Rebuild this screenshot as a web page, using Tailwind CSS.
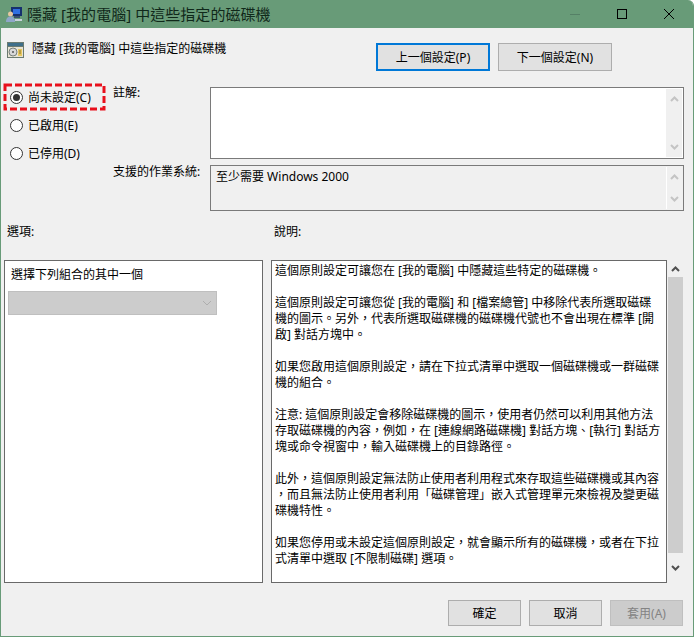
<!DOCTYPE html>
<html lang="zh-Hant">

<head>
    <meta charset="UTF-8">
    <title>隱藏 [我的電腦] 中這些指定的磁碟機</title>
    <script src="https://cdn.jsdelivr.net/npm/@tailwindcss/browser@4"></script>
</head>

<body class="bg-white">
    <div class="relative flex flex-col w-[694px] h-[637px] bg-[#f0f0f0] border-x border-b border-[#689b78] rounded-tr-[6px] overflow-hidden text-[12px] leading-[16px] text-black font-['Noto_Sans','Noto_Sans_CJK_TC',sans-serif]">

        <!-- Title bar -->
        <div class="flex items-center h-[28px] bg-[#689b78] shrink-0">
            <svg class="ml-[5px] w-[17px] h-[17px]" viewBox="0 0 17 17">
                <rect x="5" y="1" width="11" height="9" fill="#16306e" />
                <rect x="7" y="3" width="7" height="5" fill="#2f6fe0" />
                <rect x="8" y="10" width="6" height="2" fill="#39506e" />
                <circle cx="4.5" cy="8" r="2.5" fill="#e6c6a0" />
                <path d="M0 16c0-4 2-5.500 4.500-5.500S9 12 9 16z" fill="#8fa6c8" />
                <path d="M9 13h7v2H9z" fill="#c9d2dc" />
            </svg>
            <span class="ml-[4px] text-[15px] leading-[20px] tracking-[0.05px] text-[#10281a]">隱藏 [我的電腦] 中這些指定的磁碟機</span>
            <div class="ml-auto flex pr-[1px]">
                <div class="flex items-center justify-center w-[47px] h-[28px]">
                    <svg class="w-[10px] h-[10px]" viewBox="0 0 10 10"><path d="M0 5.500h10" stroke="#558066" fill="none" /></svg>
                </div>
                <div class="flex items-center justify-center w-[47px] h-[28px]">
                    <svg class="w-[10px] h-[10px]" viewBox="0 0 10 10"><rect x=".5" y=".5" width="9" height="9" stroke="#000" fill="none" /></svg>
                </div>
                <div class="flex items-center justify-center w-[47px] h-[28px]">
                    <svg class="w-[10px] h-[10px]" viewBox="0 0 10 10"><path d="M0 0l10 10M10 0L0 10" stroke="#000" fill="none" /></svg>
                </div>
            </div>
        </div>

        <!-- Policy name and prev/next -->
        <div class="flex h-[55px] shrink-0">
            <svg class="ml-[6px] mt-[14px] w-[17px] h-[16px]" viewBox="0 0 17 16">
                <rect x="0" y="0" width="17" height="16" fill="#6b7a70" />
                <rect x="1" y="1" width="15" height="3" fill="#3f6f8a" />
                <rect x="1" y="5" width="15" height="10" fill="#e8e4d4" />
                <circle cx="6" cy="10" r="4" fill="#d8d8d8" stroke="#77807c" />
                <circle cx="6" cy="10" r="1" fill="#555" />
                <path d="M11 7h4v7h-4z" fill="#e7c75f" />
                <path d="M12 9h2M12 11h2" stroke="#8a7430" />
            </svg>
            <span class="ml-[8px] mt-[13px] h-[16px]">隱藏 [我的電腦] 中這些指定的磁碟機</span>
            <div class="ml-auto flex gap-[8px] mt-[15px] pr-[81px]">
                <div class="flex items-center justify-center w-[114px] h-[28px] pt-[2px] bg-[#e1e1e1] border-2 border-[#0078d7]">上一個設定(P)</div>
                <div class="flex items-center justify-center w-[114px] h-[28px] pt-[2px] bg-[#e1e1e1] border border-[#adadad]">下一個設定(N)</div>
            </div>
        </div>

        <!-- State, comment, supported on -->
        <div class="flex h-[128px] shrink-0">
            <div class="flex flex-col w-[112px] pl-[9px]">
                <label class="flex items-center gap-[5px] h-[28px]">
                    <span class="flex items-center justify-center w-[13px] h-[13px] rounded-full bg-white border border-[#333]"><span class="w-[7px] h-[7px] rounded-full bg-[#333]"></span></span>
                    <span class="pt-[2px]">尚未設定(C)</span>
                </label>
                <label class="flex items-center gap-[5px] h-[28px]">
                    <span class="w-[13px] h-[13px] rounded-full bg-white border border-[#333]"></span>
                    <span class="pt-[2px]">已啟用(E)</span>
                </label>
                <label class="flex items-center gap-[5px] h-[28px]">
                    <span class="w-[13px] h-[13px] rounded-full bg-white border border-[#333]"></span>
                    <span class="pt-[2px]">已停用(D)</span>
                </label>
            </div>
            <div class="flex flex-col w-[97px] pt-[2px]">
                <span>註解:</span>
                <span class="mt-[63px]">支援的作業系統:</span>
            </div>
            <div class="flex flex-col gap-[6px] w-[474px] pt-[4px]">
                <div class="flex justify-end h-[72px] bg-white border border-[#7a7a7a] p-[1px]">
                    <div class="flex flex-col justify-between items-center w-[16px] bg-[#f0f0f0] py-[7px]">
                        <svg class="w-[9px] h-[6px]" viewBox="0 0 9 6"><path d="M1 5l3.500-3.500L8 5" stroke="#c4c4c4" stroke-width="2" fill="none" /></svg>
                        <svg class="w-[9px] h-[6px]" viewBox="0 0 9 6"><path d="M1 1l3.500 3.500L8 1" stroke="#c4c4c4" stroke-width="2" fill="none" /></svg>
                    </div>
                </div>
                <div class="flex justify-between h-[46px] border border-[#7a7a7a] pl-[5px] p-[1px]">
                    <span class="mt-[2px]">至少需要 Windows 2000</span>
                    <div class="flex flex-col justify-between items-center w-[16px] border-l border-white py-[7px]">
                        <svg class="w-[9px] h-[6px]" viewBox="0 0 9 6"><path d="M1 5l3.500-3.500L8 5" stroke="#c4c4c4" stroke-width="2" fill="none" /></svg>
                        <svg class="w-[9px] h-[6px]" viewBox="0 0 9 6"><path d="M1 1l3.500 3.500L8 1" stroke="#c4c4c4" stroke-width="2" fill="none" /></svg>
                    </div>
                </div>
            </div>
        </div>

        <!-- Section labels -->
        <div class="flex mt-[13px] h-[16px] shrink-0">
            <span class="w-[273px] pl-[6px]">選項:</span>
            <span>說明:</span>
        </div>

        <!-- Options and help -->
        <div class="flex mt-[20px] h-[323px] pl-[3px] shrink-0">
            <div class="w-[259px] bg-white border border-[#696969] pl-[6px] pt-[6px]">
                <div>選擇下列組合的其中一個</div>
                <div class="flex items-center justify-end w-[209px] h-[24px] mt-[8px] -ml-[3px] bg-[#cccccc] border border-[#bfbfbf] pr-[4px]">
                    <svg class="w-[10px] h-[6px]" viewBox="0 0 10 6"><path d="M1 1l4 4 4-4" stroke="#aeaeae" fill="none" /></svg>
                </div>
            </div>
            <div class="w-[396px] ml-[8px] bg-white border border-[#696969] pl-[3px] pt-[2px] whitespace-nowrap">
                <div>這個原則設定可讓您在 [我的電腦] 中隱藏這些特定的磁碟機。</div>
                <div class="mt-[16px]">這個原則設定可讓您從 [我的電腦] 和 [檔案總管] 中移除代表所選取磁碟</div>
                <div>機的圖示。另外，代表所選取磁碟機的磁碟機代號也不會出現在標準 [開</div>
                <div>啟] 對話方塊中。</div>
                <div class="mt-[16px]">如果您啟用這個原則設定，請在下拉式清單中選取一個磁碟機或一群磁碟</div>
                <div>機的組合。</div>
                <div class="mt-[16px]">注意: 這個原則設定會移除磁碟機的圖示，使用者仍然可以利用其他方法</div>
                <div>存取磁碟機的內容，例如，在 [連線網路磁碟機] 對話方塊、[執行] 對話方</div>
                <div>塊或命令視窗中，輸入磁碟機上的目錄路徑。</div>
                <div class="mt-[16px]">此外，這個原則設定無法防止使用者利用程式來存取這些磁碟機或其內容</div>
                <div>，而且無法防止使用者利用「磁碟管理」嵌入式管理單元來檢視及變更磁</div>
                <div>碟機特性。</div>
                <div class="mt-[16px]">如果您停用或未設定這個原則設定，就會顯示所有的磁碟機，或者在下拉</div>
                <div>式清單中選取 [不限制磁碟] 選項。</div>
            </div>
            <div class="flex flex-col w-[15px] ml-[1px]">
                <div class="flex items-center justify-center h-[17px]">
                    <svg class="w-[9px] h-[6px]" viewBox="0 0 9 6"><path d="M1 5l3.500-3.500L8 5" stroke="#505050" stroke-width="2" fill="none" /></svg>
                </div>
                <div class="h-[276px] bg-[#cdcdcd]"></div>
                <div class="flex items-center justify-center h-[30px]">
                    <svg class="w-[9px] h-[6px]" viewBox="0 0 9 6"><path d="M1 1l3.500 3.500L8 1" stroke="#505050" stroke-width="2" fill="none" /></svg>
                </div>
            </div>
        </div>

        <!-- Dialog buttons -->
        <div class="flex justify-end gap-[8px] mt-[17px] pr-[10px]">
            <div class="flex items-center justify-center w-[73px] h-[26px] pt-[2px] bg-[#e1e1e1] border border-[#adadad]">確定</div>
            <div class="flex items-center justify-center w-[73px] h-[26px] pt-[2px] bg-[#e1e1e1] border border-[#adadad]">取消</div>
            <div class="flex items-center justify-center w-[73px] h-[26px] pt-[2px] bg-[#cccccc] border border-[#bfbfbf] text-[#838383]">套用(A)</div>
        </div>

        <!-- Red annotation round the selected radio -->
        <svg class="absolute left-[2px] top-[83px] w-[103px] h-[28px]" viewBox="0 0 103 28">
            <rect x="2" y="2" width="99" height="24" fill="none" stroke="#e8101c" stroke-width="3" stroke-dasharray="7 3" />
        </svg>
    </div>
</body>

</html>
